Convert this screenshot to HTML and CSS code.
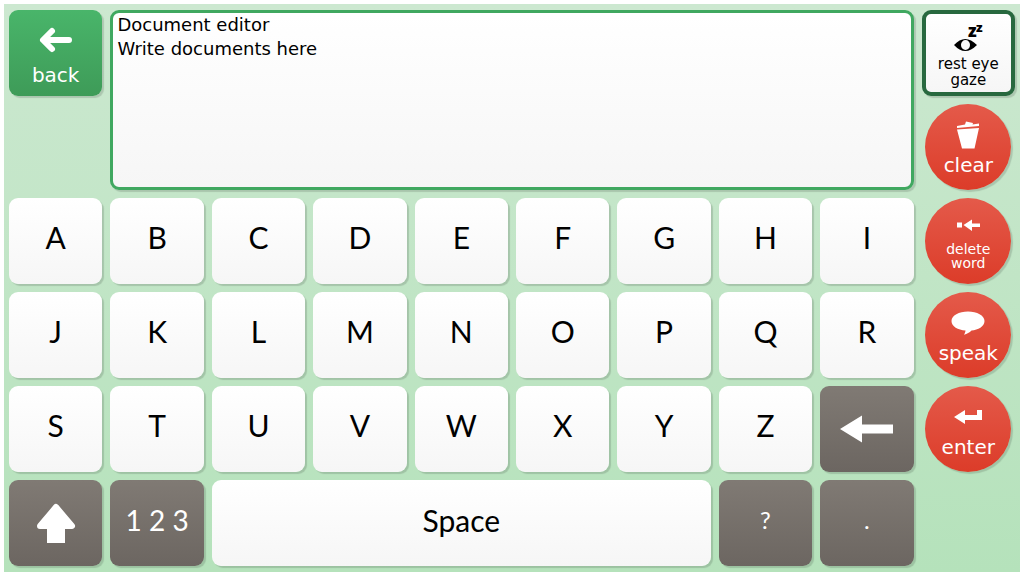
FILE: index.html
```
<!DOCTYPE html>
<html lang="en">
<head>
<meta charset="utf-8">
<meta name="viewport" content="width=device-width, initial-scale=1">
<title>Document editor</title>
<link rel="stylesheet" href="styles.css">
</head>
<body>
<main class="board">
  <button class="key action back" type="button">
    <span class="icon"><svg width="34" height="26" viewBox="0 0 34 26" fill="none" stroke="#fff" stroke-width="6" stroke-linecap="round" stroke-linejoin="round"><path d="M13 4 4 13l9 9M5 13h25"/></svg></span>
    <span class="label">back</span>
  </button>
  <textarea class="editor" aria-label="Document" spellcheck="false">Document editor
Write documents here</textarea>
  <button class="key action rest" type="button">
    <span class="icon"><svg width="30" height="28" viewBox="0 0 30 28"><text class="snooze" x="15" y="13" font-size="17">z</text><text class="snooze" x="23" y="8" font-size="13">z</text><path fill-rule="evenodd" d="M1 21Q12 9 24 21Q12 33 1 21ZM12.500 16a4.500 5 0 1 0 0 10a4.500 5 0 1 0 0-10Z"/></svg></span>
    <span class="label">rest eye<br>gaze</span>
  </button>
  <button class="key action round" type="button">
    <span class="icon"><svg width="24" height="28" viewBox="0 0 24 28" fill="#fff"><path d="M1 5 9 3.500 10 .5 17 2 16.500 3.500 23 2.500V5L1 7ZM1 8.500 23 7 18.500 27.500H6Z"/></svg></span>
    <span class="label">clear</span>
  </button>

  <button class="key letter" type="button">A</button>
  <button class="key letter" type="button">B</button>
  <button class="key letter" type="button">C</button>
  <button class="key letter" type="button">D</button>
  <button class="key letter" type="button">E</button>
  <button class="key letter" type="button">F</button>
  <button class="key letter" type="button">G</button>
  <button class="key letter" type="button">H</button>
  <button class="key letter" type="button">I</button>
  <button class="key action round small" type="button">
    <span class="icon"><svg width="24" height="12" viewBox="0 0 24 12" fill="#fff"><path d="M1 3.500h5v5H1ZM7.500 6 16 .5v4h8v3.500h-8v4Z"/></svg></span>
    <span class="label">delete<br>word</span>
  </button>

  <button class="key letter" type="button">J</button>
  <button class="key letter" type="button">K</button>
  <button class="key letter" type="button">L</button>
  <button class="key letter" type="button">M</button>
  <button class="key letter" type="button">N</button>
  <button class="key letter" type="button">O</button>
  <button class="key letter" type="button">P</button>
  <button class="key letter" type="button">Q</button>
  <button class="key letter" type="button">R</button>
  <button class="key action round" type="button">
    <span class="icon"><svg width="34" height="24" viewBox="0 0 34 24" fill="#fff"><path d="M17 .5C26 .5 33.500 4.500 33.500 10S27 19 20.500 19.500C18.500 21.500 16 23 13 23.800 14 22 14.500 20.500 14.500 19.500 7 19 .5 15.500 .5 10S8 .5 17 .5Z"/></svg></span>
    <span class="label">speak</span>
  </button>

  <button class="key letter" type="button">S</button>
  <button class="key letter" type="button">T</button>
  <button class="key letter" type="button">U</button>
  <button class="key letter" type="button">V</button>
  <button class="key letter" type="button">W</button>
  <button class="key letter" type="button">X</button>
  <button class="key letter" type="button">Y</button>
  <button class="key letter" type="button">Z</button>
  <button class="key dark" type="button" aria-label="Backspace"><svg width="54" height="28" viewBox="0 0 54 28" fill="#fff"><path d="M0 14 22 .5V9.500H53v9H22V27.500Z"/></svg></button>
  <button class="key action round" type="button">
    <span class="icon"><svg width="28" height="14" viewBox="0 0 28 14" fill="#fff"><path d="M0 7 11 0V5H23V0H28V10H11V14Z"/></svg></span>
    <span class="label">enter</span>
  </button>

  <button class="key dark" type="button" aria-label="Shift"><svg width="40" height="40" viewBox="0 0 40 40" fill="#fff" stroke="#fff" stroke-linejoin="round"><path stroke-width="6" d="M20 4 36 23H4Z"/><path stroke="none" d="M11 24H29V40H11Z"/></svg></button>
  <button class="key letter dark" type="button">1 2 3</button>
  <button class="key letter space" type="button">Space</button>
  <button class="key letter dark punctuation" type="button">?</button>
  <button class="key letter dark punctuation" type="button">.</button>
</main>
</body>
</html>
```
FILE: styles.css
```
* {
  box-sizing: border-box;
}

body {
  margin: 0;
  background: #fff;
}

.board {
  display: grid;
  grid-template-columns: repeat(10, minmax(0, 1fr));
  grid-template-rows: repeat(6, minmax(86px, 1fr));
  gap: 8px;
  min-height: 100vh;
  padding: 6px 5px;
  border: 4px solid #fff;
  background: linear-gradient(#cce8d0, #b5e2bb);
}

.key {
  display: flex;
  align-items: center;
  justify-content: center;
  min-width: 0;
  margin: 0;
  padding: 0;
  border: 0;
  border-radius: 9px;
  background: linear-gradient(#fff, #f6f6f6);
  box-shadow: 2px 2px 1px rgba(0, 0, 0, 0.14);
  color: #000;
  cursor: pointer;
}

.letter {
  padding-bottom: 8px;
  font: 30px/36px Lato, sans-serif;
}

.dark {
  background: linear-gradient(#807a74, #6c6661);
  color: #fff;
}

.dark.letter {
  padding-bottom: 6px;
  font-size: 28px;
}

.dark.punctuation {
  font-size: 24px;
}

.space {
  grid-column: span 5;
  padding-bottom: 6px;
}

.action {
  flex-direction: column;
  padding: 12px 0 13px;
  font: 20px/24px "DejaVu Sans", sans-serif;
}

.icon {
  display: flex;
  flex: 1;
  align-items: center;
  justify-content: center;
}

.back {
  padding: 7px 0 9px;
  background: linear-gradient(#49b56a, #3e9b58);
  color: #fff;
}

.rest {
  padding: 5px 0 4px;
  border: 4px solid #28693f;
  font-size: 15px;
  line-height: 16px;
}

.icon svg {
  overflow: visible;
}

.snooze {
  font-family: "Open Sans", sans-serif;
  font-weight: 800;
}

.round {
  justify-self: center;
  aspect-ratio: 1;
  border-radius: 50%;
  background: linear-gradient(#e45a4a, #dc3c29);
  color: #fff;
}

.small {
  padding: 10px 0 14px;
  font-size: 14px;
  line-height: 14px;
}

.editor {
  grid-column: 2 / span 8;
  grid-row: 1 / span 2;
  width: 100%;
  height: 100%;
  margin: 0;
  padding: 0 4px;
  border: 3px solid #40a860;
  border-radius: 9px;
  outline: 0;
  background: linear-gradient(#fff, #f6f6f6);
  box-shadow: 2px 2px 1px rgba(0, 0, 0, 0.14);
  color: #000;
  font: 18px/24px "DejaVu Sans", sans-serif;
  resize: none;
}

.rest + .round {
  grid-column: 10;
}
```
